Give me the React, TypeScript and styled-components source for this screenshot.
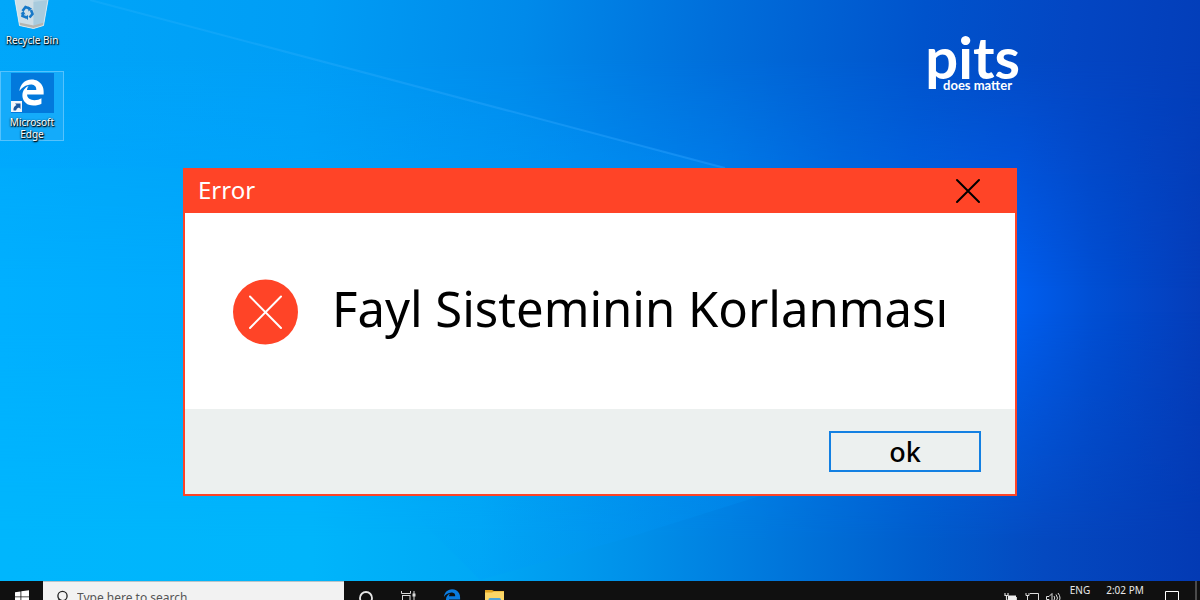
import React from "react";
import styled, { createGlobalStyle } from "styled-components";
import { FaEdgeLegacy } from "react-icons/fa";

const GlobalStyle = createGlobalStyle`
  *, *::before, *::after { box-sizing: border-box; }
  body { margin: 0; font-family: "Noto Sans", "Open Sans", sans-serif; }
  button, input { font: inherit; color: inherit; }
  button { border: 0; padding: 0; background: none; cursor: pointer; }
`;

const Screen = styled.div`
  position: relative;
  isolation: isolate;
  display: flex;
  flex-direction: column;
  height: 100vh;
  overflow: hidden;
`;

const Wallpaper = styled.div`
  position: absolute;
  inset: 0;
  z-index: -1;
  background: linear-gradient(90deg, #00b0ff 0%, #00a8fc 25%, #0096f8 46%, #0088f6 60%, #0072ec 70%, #005eee 85%, #004fd4 91%, #053dba 100%);
`;

const Sky = styled.div<{ $side: "top" | "bottom" }>`
  position: absolute;
  inset: 0;
  background: ${(p) =>
    p.$side === "top"
      ? "linear-gradient(95deg, #00a7fa 0%, #009df5 25%, #008aea 42%, #006fdb 57%, #0053cc 74%, #0346c3 86%, #033bb6 100%)"
      : "linear-gradient(90deg, #00b6fd 0%, #00b5fb 26%, #00a8f5 40%, #0090e9 53%, #0076db 65%, #005ccc 77%, #0449c0 87%, #033ab4 100%)"};
  mask-image: linear-gradient(${(p) => (p.$side === "top" ? "to bottom" : "to top")}, #000 0%, #000 10%, transparent 48%);
`;

const Rays = styled.svg`
  position: absolute;
  inset: 0;
  width: 100%;
  height: 100%;
`;

const Desktop = styled.main`
  flex: 1;
  min-height: 0;
`;

const Shortcuts = styled.nav`
  display: flex;
  flex-direction: column;
  gap: 24px;
  width: 64px;
`;

const Shortcut = styled.button<{ $selected?: boolean }>`
  display: flex;
  flex-direction: column;
  align-items: center;
  gap: 3px;
  border: 1px solid ${(p) => (p.$selected ? "#55c2fc" : "transparent")};
  border-top-width: ${(p) => (p.$selected ? "1px" : "0")};
  background: ${(p) => (p.$selected ? "#14abfa" : "transparent")};
  color: #fff;
  font-size: 10px;
  line-height: 12px;
  text-shadow: 1px 1px 1px #000, 0 1px 2px #000c, 0 0 2px #0006;
`;

const Brand = styled.div`
  position: absolute;
  top: 28px;
  right: 180px;
  display: flex;
  flex-direction: column;
  align-items: flex-end;
  color: #fff;
  font-family: Lato, sans-serif;
  font-weight: 700;
`;

const BrandName = styled.span`
  font-size: 58px;
  line-height: 58px;
`;

const BrandTag = styled.span`
  margin-top: -9px;
  padding-right: 8px;
  font-size: 13px;
  line-height: 16px;
`;

const Dialog = styled.section`
  position: absolute;
  top: 168px;
  left: 183px;
  right: 183px;
  border: 2px solid #ff4427;
  background: #fff;
  color: #000;
`;

const TitleBar = styled.header`
  display: flex;
  align-items: center;
  justify-content: space-between;
  height: 43px;
  padding: 0 34px 2px 13px;
  background: #ff4427;
`;

const Title = styled.h1`
  margin: 0;
  padding-bottom: 2px;
  color: #fff;
  font-size: 24px;
  line-height: 38px;
  font-weight: 400;
`;

const CloseButton = styled.button`
  display: grid;
  place-items: center;
  width: 26px;
  height: 26px;
`;

const Message = styled.div`
  display: flex;
  align-items: center;
  gap: 33px;
  height: 196px;
  padding: 2px 48px 0;
`;

const Badge = styled.svg`
  flex: none;
  width: 66px;
  height: 66px;
`;

const MessageText = styled.p`
  margin: 0;
  font-size: 49px;
  line-height: 60px;
  padding-bottom: 8px;
  white-space: nowrap;
`;

const Actions = styled.footer`
  display: flex;
  justify-content: flex-end;
  align-items: center;
  height: 85px;
  padding: 0 34px;
  background: #ecf0ef;
`;

const OkButton = styled.button`
  width: 152px;
  height: 41px;
  border: 2px solid #1380e2;
  font-size: 27px;
  line-height: 38px;
  font-weight: 500;
`;

const Taskbar = styled.footer`
  display: flex;
  align-items: flex-start;
  height: 19px;
  overflow: hidden;
  background: #101010;
  color: #e8e8e8;
`;

const TaskButton = styled.button`
  display: flex;
  justify-content: center;
  flex: none;
  width: 43px;
  height: 32px;
  padding-top: 8px;
`;

const Search = styled.label`
  display: flex;
  align-items: flex-start;
  gap: 8px;
  width: 301px;
  height: 32px;
  padding: 8px 12px 0;
  border-top: 1px solid #b9c4c8;
  background: #f2f2f2;
  color: #444;
`;

const SearchInput = styled.input`
  flex: 1;
  min-width: 0;
  height: 16px;
  padding: 0;
  border: 0;
  outline: 0;
  background: none;
  font-size: 12px;
  line-height: 16px;
  &::placeholder { color: #555; opacity: 1; }
`;

const Tray = styled.div`
  display: flex;
  align-items: flex-start;
  gap: 7px;
  height: 32px;
  margin-left: auto;
`;

const TrayText = styled.span<{ $width: number }>`
  width: ${(p) => p.$width}px;
  padding-top: 2px;
  text-align: center;
  font-size: 10px;
  line-height: 14px;
  white-space: nowrap;
`;

const TrayButton = styled.button`
  display: flex;
  padding-top: 10px;
`;

const ShowDesktop = styled.button`
  width: 5px;
  height: 32px;
  border-left: 2px solid #4a4a4a;
`;

const Cross = ({ size, width }: { size: number; width: number }) => (
  <svg width={size} height={size} viewBox={`0 0 ${size} ${size}`} fill="none" stroke="currentColor" strokeWidth={width} aria-hidden="true">
    <path d={`M2 2 ${size - 2} ${size - 2}M${size - 2} 2 2 ${size - 2}`} strokeLinecap="round" />
  </svg>
);

const ErrorIcon = () => (
  <Badge viewBox="0 0 66 66" aria-hidden="true">
    <circle cx="32.5" cy="33" r="32.5" fill="#ff4427" />
    <path d="M17 17.500 48 49M48 17.500 17 49" stroke="#fff" strokeWidth="2" strokeLinecap="round" />
  </Badge>
);

const RecycleBinIcon = () => (
  <svg width="36" height="31" viewBox="0 0 36 31" aria-hidden="true">
    <path d="M1 0h33l-4.500 25.500-10 3-14-3z" fill="#bcd6e4" />
    <path d="M1 0h18.500v28.500l-14-3z" fill="#cfdee6" />
    <path d="M19.500 2 34 0l-4.500 25.500-10 3z" fill="#a9cbdd" />
    <path d="M5.200 22.500 19.500 25.500l10.500-3-.500 3-10 3-14-3z" fill="#b5b5b0" />
    <path d="M1 0 5.500 25.500 19.500 28.500 29.500 25.500 34 0" fill="none" stroke="#e5f2f8" strokeWidth=".8" />
    <g fill="none" stroke="#1678c8" strokeWidth="2.600">
      <path d="m8.500 11 3-4 4 1.500" />
      <path d="m17 10 1.500 4-3 3.500" />
      <path d="M12.500 17.500 8.500 16l.5-3" />
    </g>
    <path d="m14 6.500 4 2-3.500 3zM14 15v5l-3.500-3zM6.500 13.500l3-2.500 2 3.500z" fill="#1678c8" />
  </svg>
);

const EdgeTile = () => (
  <svg width="43" height="41" viewBox="0 0 43 41" aria-hidden="true">
    <rect y="1" width="43" height="40" fill="#0279dc" />
    <svg x="7" y="7" width="27" height="27" viewBox="0 0 512 512"><FaEdgeLegacy color="#fff" size={512} /></svg>
    <rect x="0" y="29" width="11" height="11" fill="#f2f6fa" />
    <path d="M2.500 38.500q-.5-4 3-5.500L4 31.500h5.500V37L8 35.500q-2.500.5-3 3z" fill="#1a579f" />
  </svg>
);

const StartIcon = () => (
  <svg width="14" height="14" viewBox="0 0 14 14" fill="#fff" aria-hidden="true">
    <path d="M0 3.200 5.500 2.400V7.400H0zM6.300 2.300 14 1.200V7.400H6.300zM0 8.200h5.500v5L0 12.400zM6.300 8.200H14V14L6.300 13.300z" />
  </svg>
);

const SearchIcon = () => (
  <svg width="14" height="16" viewBox="0 0 14 16" fill="none" stroke="#222" strokeWidth="1.300" aria-hidden="true">
    <circle cx="7.500" cy="6" r="4.600" />
    <path d="M4.300 9.500 1 14" />
  </svg>
);

const CortanaIcon = () => (
  <svg width="16" height="18" viewBox="0 0 16 18" aria-hidden="true">
    <circle cx="8" cy="9" r="6" fill="none" stroke="#e6e6e6" strokeWidth="1.800" />
  </svg>
);

const TaskViewIcon = () => (
  <svg width="16" height="18" viewBox="0 0 16 18" fill="none" stroke="#d8d8d8" aria-hidden="true">
    <path d="M.5 2v2.500h9V2M.5 16v-2.500h9V16" />
    <rect x="1.500" y="6.500" width="7.500" height="5" />
    <path d="M13 2v14" />
    <path d="M13 4.500v3" strokeWidth="3" />
  </svg>
);

const FolderIcon = () => (
  <svg width="20" height="18" viewBox="0 0 20 18" aria-hidden="true">
    <path d="M0 1h7l2 1h10v14H0z" fill="#e1a421" />
    <path d="M0 3.500h7L9 2.500h10V17H0z" fill="#fbd667" />
    <path d="M3.500 10.500q0-1.500 1.500-1.500h9.500q1.500 0 1.500 1.500V17H3.500z" fill="#4ba3d9" />
  </svg>
);

const BatteryIcon = () => (
  <svg width="14" height="14" viewBox="0 0 14 14" aria-hidden="true">
    <path d="M4 4.500h8v7H4z" fill="#eee" />
    <path d="M12.500 6v4" stroke="#ccc" />
    <path d="M1 2v2.500h3V2M2.500 4.500V8q0 1.500 2 1.500" fill="none" stroke="#ddd" strokeWidth="1.200" />
  </svg>
);

const NetworkIcon = () => (
  <svg width="14" height="14" viewBox="0 0 14 14" fill="none" stroke="#ddd" aria-hidden="true">
    <path d="M5 2.500h8.500v8H4M1 2v2.500h3V2M2.500 5v8M6 12.500h6" />
  </svg>
);

const SpeakerIcon = () => (
  <svg width="15" height="14" viewBox="0 0 15 14" fill="none" stroke="#ddd" aria-hidden="true">
    <path d="M.5 5.500H3L6 2.500v9L3 8.500H.5zM8 5q1.500 2 0 4M10 3.500q3 3.500 0 7M12 2q4 5 0 10" />
  </svg>
);

export default function App() {
  return (
    <Screen>
      <GlobalStyle />
      <Wallpaper aria-hidden="true">
        <Sky $side="top" />
        <Sky $side="bottom" />
        <Rays viewBox="0 0 1200 600" preserveAspectRatio="none">
          <defs>
            <linearGradient id="ray" x1="0" x2="1">
              <stop offset="0" stopColor="#4cc0ff" stopOpacity=".15" />
              <stop offset="1" stopColor="#2aa0ff" stopOpacity=".45" />
            </linearGradient>
            <linearGradient id="beam" x1="0" y1="0" x2="0" y2="1">
              <stop offset="0" stopColor="#00a0ff" stopOpacity="0" />
              <stop offset="1" stopColor="#00a0ff" stopOpacity=".18" />
            </linearGradient>
            <linearGradient id="lower" x1="760" y1="496" x2="725" y2="400" gradientUnits="userSpaceOnUse">
              <stop offset="0" stopColor="#0098fa" stopOpacity=".22" />
              <stop offset="1" stopColor="#0098fa" stopOpacity="0" />
            </linearGradient>
          </defs>
          <path d="M90 0 725 168H0V0z" fill="url(#beam)" />
          <path d="M90 0 725 168" stroke="url(#ray)" strokeWidth="2" />
          <path d="M480 580 620 540 760 496V400H300z" fill="url(#lower)" />
        </Rays>
      </Wallpaper>

      <Desktop>
        <Shortcuts aria-label="Desktop shortcuts">
          <Shortcut>
            <RecycleBinIcon />
            Recycle Bin
          </Shortcut>
          <Shortcut $selected>
            <EdgeTile />
            <span>Microsoft<br />Edge</span>
          </Shortcut>
        </Shortcuts>

        <Brand>
          <BrandName>pits</BrandName>
          <BrandTag>does matter</BrandTag>
        </Brand>

        <Dialog role="alertdialog" aria-labelledby="dialog-title" aria-describedby="dialog-text">
          <TitleBar>
            <Title id="dialog-title">Error</Title>
            <CloseButton aria-label="Close">
              <Cross size={26} width={2} />
            </CloseButton>
          </TitleBar>
          <Message>
            <ErrorIcon />
            <MessageText id="dialog-text">Fayl Sisteminin Korlanması</MessageText>
          </Message>
          <Actions>
            <OkButton>ok</OkButton>
          </Actions>
        </Dialog>
      </Desktop>

      <Taskbar>
        <TaskButton aria-label="Start"><StartIcon /></TaskButton>
        <Search>
          <SearchIcon />
          <SearchInput type="text" placeholder="Type here to search" aria-label="Search" />
        </Search>
        <TaskButton aria-label="Cortana"><CortanaIcon /></TaskButton>
        <TaskButton aria-label="Task view"><TaskViewIcon /></TaskButton>
        <TaskButton aria-label="Microsoft Edge"><FaEdgeLegacy size={18} color="#0a7be0" /></TaskButton>
        <TaskButton aria-label="File Explorer"><FolderIcon /></TaskButton>
        <Tray>
          <TrayButton aria-label="Battery"><BatteryIcon /></TrayButton>
          <TrayButton aria-label="Network"><NetworkIcon /></TrayButton>
          <TrayButton aria-label="Volume"><SpeakerIcon /></TrayButton>
          <TrayText $width={24}>ENG</TrayText>
          <TrayText $width={52}>2:02 PM</TrayText>
          <TrayButton aria-label="Notifications">
            <svg width="30" height="14" viewBox="0 0 30 14" fill="none" stroke="#fff" aria-hidden="true">
              <path d="M7.500.5h13v11h-13z" />
            </svg>
          </TrayButton>
          <ShowDesktop aria-label="Show desktop" />
        </Tray>
      </Taskbar>
    </Screen>
  );
}
